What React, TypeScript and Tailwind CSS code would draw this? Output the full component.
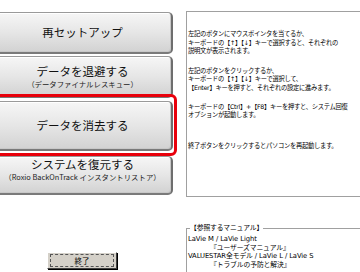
import React from 'react';

const jp = { fontFamily: '"MS PGothic", "Noto Sans CJK JP", "Noto Sans", sans-serif' };
const info = { fontFamily: '"DejaVu Sans", "Noto Sans CJK JP", sans-serif' };

function MenuButton({ title, sub, className }: { title: string; sub?: string; className: string }) {
  return (
    <div
      className={`relative -ml-[6px] flex flex-col items-center rounded-r-[5px] border border-l-0 border-t-[#9a9a9a] border-r-[2px] border-r-[#6e6e6e] border-b-[2px] border-b-[#7a7a7a] bg-gradient-to-b from-[#f6f6f6] via-[#e6e6e6] to-[#d2d2d2] shadow-[inset_-1px_-1px_0_#c8c8c8,inset_0_1px_0_#ffffff] ${className}`}
    >
      <span className="text-[11.5px] leading-[13px] text-[#111]">{title}</span>
      {sub && <span className="mt-[1px] text-[7.4px] leading-[9px] text-[#222] whitespace-nowrap">{sub}</span>}
    </div>
  );
}

export default function App() {
  return (
    <div className="relative w-[360px] h-[272px] overflow-hidden bg-white text-black" style={jp}>
      <div className="flex">
        {/* left menu */}
        <div className="flex w-[179px] shrink-0 flex-col pt-[12px]">
          <MenuButton title="再セットアップ" className="w-[179px] h-[42px] justify-center" />
          <MenuButton title="データを退避する" sub="（データファイナルレスキュー）" className="mt-[2px] w-[179px] h-[42px] justify-center" />
          <MenuButton title="データを消去する" className="mt-[3px] w-[179px] h-[50px] justify-center" />
          <MenuButton title="システムを復元する" sub="（Roxio BackOnTrack インスタントリストア）" className="mt-[5px] w-[179px] h-[39px] justify-start pt-[1px]" />
          <div className="mt-[57px] ml-[47px] flex h-[17px] w-[70px] items-center justify-center border border-t-white border-l-white border-r-[#404040] border-b-[#404040] bg-[#d4d0c8] shadow-[1px_1px_0_#000]">
            <div className="flex h-[13px] w-[64px] items-center justify-center border border-dashed border-[#555]">
              <span className="text-[7.5px] leading-[8px]">終了</span>
            </div>
          </div>
        </div>

        {/* right info */}
        <div className="ml-[7px] flex w-[200px] shrink-0 flex-col text-[6.3px] leading-[8.6px] tracking-[-0.3px]" style={info}>
          <div className="mt-[11px] h-[186px] border border-[#a0a0a0] pl-[1px] pt-[18px]">
            <p>左記のボタンにマウスポインタを当てるか、<br />キーボードの【↑】【↓】キーで選択すると、それぞれの<br />説明文が表示されます。</p>
            <p className="mt-[11px]">左記のボタンをクリックするか、<br />キーボードの【↑】【↓】キーで選択して、<br />【Enter】キーを押すと、それぞれの設定に進みます。</p>
            <p className="mt-[10px]">キーボードの【Ctrl】+【F8】キーを押すと、システム回復<br />オプションが起動します。</p>
            <p className="mt-[22px]">終了ボタンをクリックするとパソコンを再起動します。</p>
          </div>
          <fieldset className="mt-[27px] h-[60px] border border-[#a0a0a0] pl-[1px] pt-[2px] text-[6.8px] leading-[8.8px] tracking-[-0.1px]">
            <legend className="ml-[2px] px-0">【参照するマニュアル】</legend>
            <p>LaVie M / LaVie Light</p>
            <p className="pl-[22px]">『ユーザーズマニュアル』</p>
            <p>VALUESTAR全モデル / LaVie L / LaVie S</p>
            <p className="pl-[22px]">『トラブルの予防と解決』</p>
          </fieldset>
        </div>
      </div>

      {/* focus highlight around the selected button */}
      <div className="absolute left-[-6px] top-[94px] h-[62px] w-[183px] rounded-[6px] border-[3px] border-[#e8000b]" />
    </div>
  );
}
